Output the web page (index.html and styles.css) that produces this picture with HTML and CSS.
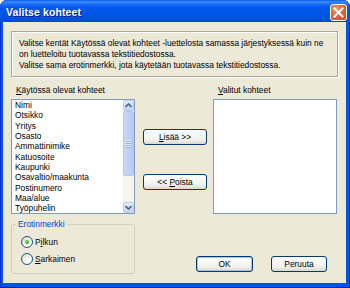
FILE: index.html
```html
<!DOCTYPE html>
<html lang="fi">
<head>
<meta charset="utf-8">
<title>Valitse kohteet</title>
<link rel="stylesheet" href="styles.css">
</head>
<body>
<div class="window">
  <div class="titlebar">
    <span class="title">Valitse kohteet</span>
    <span class="close"><svg width="11" height="11" viewBox="0 0 11 11"><path d="M1.5 1.5 L9.5 9.5 M9.5 1.5 L1.5 9.5" stroke="#fff" stroke-width="2" stroke-linecap="square"/></svg></span>
  </div>
  <div class="client">
    <div class="info">
      <p>Valitse kentät Käytössä olevat kohteet -luettelosta samassa järjestyksessä kuin ne<br>on luetteloitu tuotavassa tekstitiedostossa.<br>Valitse sama erotinmerkki, jota käytetään tuotavassa tekstitiedostossa.</p>
    </div>
    <div class="lists">
      <div class="col">
        <div class="label"><u>K</u>äytössä olevat kohteet</div>
        <div class="listbox">
          <ul class="items">
            <li>Nimi</li>
            <li>Otsikko</li>
            <li>Yritys</li>
            <li>Osasto</li>
            <li>Ammattinimike</li>
            <li>Katuosoite</li>
            <li>Kaupunki</li>
            <li>Osavaltio/maakunta</li>
            <li>Postinumero</li>
            <li>Maa/alue</li>
            <li>Työpuhelin</li>
          </ul>
          <div class="scrollbar">
            <div class="sb-btn"><svg width="7" height="5" viewBox="0 0 7 5"><path d="M0.5 4 L3.5 1 L6.5 4" fill="none" stroke="#4D6185" stroke-width="1.6"/></svg></div>
            <div class="sb-thumb"><span class="grip"></span><span class="grip"></span><span class="grip"></span><span class="grip"></span></div>
            <div class="sb-track"></div>
            <div class="sb-btn"><svg width="7" height="5" viewBox="0 0 7 5"><path d="M0.5 1 L3.5 4 L6.5 1" fill="none" stroke="#4D6185" stroke-width="1.6"/></svg></div>
          </div>
        </div>
      </div>
      <div class="mid">
        <button class="btn move"><u>L</u>isää &gt;&gt;</button>
        <button class="btn move">&lt;&lt; <u>P</u>oista</button>
      </div>
      <div class="col">
        <div class="label indent"><u>V</u>alitut kohteet</div>
        <div class="listbox"></div>
      </div>
    </div>
    <div class="bottom">
      <fieldset class="group">
        <legend>Erotinmerkki</legend>
        <div class="radio"><span class="circle checked"></span><span>P<u>i</u>lkun</span></div>
        <div class="radio"><span class="circle"></span><span><u>S</u>arkaimen</span></div>
      </fieldset>
      <div class="actions">
        <button class="btn ok">OK</button>
        <button class="btn cancel">Peruuta</button>
      </div>
    </div>
  </div>
</div>
</body>
</html>
```
FILE: styles.css
```css
* { box-sizing: border-box; }
html, body { margin: 0; padding: 0; background: #fff; }
body { font-family: "Liberation Sans", Arial, sans-serif; font-size: 8.4px; color: #000; }

.window {
  width: 350px;
  height: 288px;
  display: flex;
  flex-direction: column;
  background: #0055E5;
  border-radius: 7px 7px 0 0;
  box-shadow: inset 1px 0 0 #0831D9, inset -1px 0 0 #001EA0, inset 0 -1px 0 #001EA0;
}

.titlebar {
  height: 22px;
  flex: none;
  display: flex;
  align-items: center;
  justify-content: space-between;
  padding: 1px 3px 0 6px;
  border-radius: 7px 7px 0 0;
  background: linear-gradient(to bottom, #0A5DEB 0%, #3D8FF8 9%, #1C6EF5 18%, #0058EE 35%, #0054E3 65%, #0052DE 85%, #0048CA 100%);
}
.title {
  color: #fff;
  font-weight: bold;
  font-size: 10.5px;
  letter-spacing: 0.1px;
  text-shadow: 1px 1px 0 #0A1883;
}
.close {
  width: 17px;
  height: 17px;
  margin-top: 1px;
  border: 1px solid #fff;
  border-radius: 3px;
  background: radial-gradient(circle at 35% 30%, #F39A7C 0%, #E2663F 45%, #CC4421 100%);
  display: flex;
  align-items: center;
  justify-content: center;
}
.close svg { display: block; }

.client {
  flex: 1;
  margin: 0 4px 5px 3px;
  background: #ECE9D8;
  padding: 9px 8px 0 8px;
  display: flex;
  flex-direction: column;
}

.info {
  height: 46px;
  border: 1px solid #ACA899;
  box-shadow: inset 1px 1px 0 #fff, 1px 1px 0 #fff;
  padding: 6px 7px 0 7px;
}
.info p { margin: 0; line-height: 11px; }

.lists {
  margin-top: 8px;
  display: grid;
  grid-template-columns: 124px 78px 124px;
}
.label { line-height: 10px; height: 10px; margin-bottom: 4px; padding-left: 5px; }
.label.indent { padding-left: 5px; }

.listbox {
  height: 115px;
  border: 1px solid #7F9DB9;
  background: #fff;
  display: flex;
}
.items {
  flex: 1;
  list-style: none;
  margin: 0;
  padding: 0 0 0 3px;
}
.items li { line-height: 10.35px; height: 10.35px; white-space: nowrap; }

.scrollbar {
  width: 11px;
  display: flex;
  flex-direction: column;
  background: #F5F4EE;
}
.sb-btn {
  height: 11px;
  flex: none;
  border: 1px solid #B8CCF4;
  border-radius: 2px;
  background: linear-gradient(to bottom, #E2EBFD, #C2D4FA);
  display: flex;
  align-items: center;
  justify-content: center;
}
.sb-btn svg { display: block; }
.sb-thumb {
  height: 65px;
  flex: none;
  border: 1px solid #B4C8F3;
  border-radius: 2px;
  background: linear-gradient(to right, #C8D8FB, #BDD0F8 60%, #B3C8F6);
  display: flex;
  flex-direction: column;
  align-items: center;
  justify-content: center;
  gap: 1px;
}
.grip { width: 5px; height: 1px; background: #EEF3FE; box-shadow: 0 1px 0 #8CB0F8; }
.sb-track { flex: 1; }

.mid {
  display: flex;
  flex-direction: column;
  padding: 44px 0 0 8px;
  gap: 29px;
}

.btn {
  font-family: "Liberation Sans", Arial, sans-serif;
  font-size: 8.4px;
  color: #000;
  height: 16px;
  padding: 0;
  border: 1px solid #003C74;
  border-radius: 3px;
  background: linear-gradient(to bottom, #FFFFFF 0%, #F7F7F4 45%, #EEEDE7 75%, #DCD7CB 100%);
  line-height: 14px;
  text-align: center;
}
.btn.move { width: 64px; }
.btn.ok { width: 57px; box-shadow: inset 0 0 0 1px #A8C2EE; }
.btn.cancel { width: 56px; }

.bottom {
  margin-top: 5px;
  display: flex;
  justify-content: space-between;
}
.group {
  width: 124px;
  margin: 0;
  border: 1px solid #D0D0BF;
  border-radius: 3px;
  padding: 7px 0 8px 9px;
  display: flex;
  flex-direction: column;
  gap: 5px;
}
.group legend {
  color: #0046D5;
  line-height: 10px;
  padding: 0 2px;
  margin-left: -5px;
}
.radio {
  display: flex;
  align-items: center;
  gap: 2px;
  height: 12px;
}
.circle {
  width: 12px;
  height: 12px;
  border: 1px solid #1C5180;
  border-radius: 50%;
  background: linear-gradient(135deg, #DCDCD5 0%, #F4F3EE 55%, #FFFFFF 100%);
  display: flex;
  align-items: center;
  justify-content: center;
}
.circle.checked::after {
  content: "";
  width: 4px;
  height: 4px;
  border-radius: 50%;
  background: radial-gradient(circle at 35% 35%, #5FDA5F, #21A121);
}

.actions {
  align-self: flex-end;
  display: flex;
  gap: 18px;
  margin: 0 11px 2px 0;
}
```
